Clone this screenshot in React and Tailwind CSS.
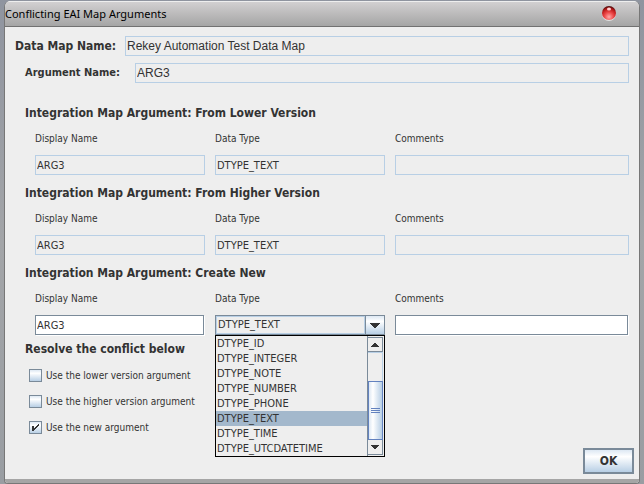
import { useState } from "react";

const TYPES = [
  "DTYPE_ID",
  "DTYPE_INTEGER",
  "DTYPE_NOTE",
  "DTYPE_NUMBER",
  "DTYPE_PHONE",
  "DTYPE_TEXT",
  "DTYPE_TIME",
  "DTYPE_UTCDATETIME",
];

const CHOICES = [
  { id: "lower", label: "Use the lower version argument" },
  { id: "higher", label: "Use the higher version argument" },
  { id: "new", label: "Use the new argument" },
];

const READ_ONLY =
  "block h-5 w-full min-w-0 border border-[#b8cfe5] bg-[#eeeeee] outline-none";
const EDITABLE =
  "block h-5 w-full min-w-0 border border-[#7a8a99] bg-white px-px text-[11px] outline-none shadow-[1px_1px_0_#ffffff]";
const HEADING = "h-5 pl-5 text-[12px] leading-5 font-bold";

function Columns({ children }) {
  return (
    <div className="grid grid-cols-[170px_170px_minmax(0,1fr)] gap-x-[10px] gap-y-1.5 pl-[30px]">
      {children}
    </div>
  );
}

function ColumnLabels({ id }) {
  return (
    <>
      <label className="h-5 leading-5" htmlFor={`${id}-name`}>Display Name</label>
      <label className="h-5 leading-5" htmlFor={`${id}-type`}>Data Type</label>
      <label className="h-5 leading-5" htmlFor={`${id}-comments`}>Comments</label>
    </>
  );
}

function VersionSection({ id, title }) {
  return (
    <section className="mb-2 flex flex-col gap-1.5">
      <h2 className={HEADING}>{title}</h2>
      <Columns>
        <ColumnLabels id={id} />
        <input id={`${id}-name`} readOnly defaultValue="ARG3" className={`${READ_ONLY} px-px text-[11px]`} />
        <input id={`${id}-type`} readOnly defaultValue="DTYPE_TEXT" className={`${READ_ONLY} px-px text-[11px]`} />
        <input id={`${id}-comments`} readOnly className={`${READ_ONLY} px-px text-[11px]`} />
      </Columns>
    </section>
  );
}

function ScrollBar() {
  return (
    <div className="flex w-4 shrink-0 flex-col border-l border-[#7a8a99] pt-px pb-px">
      <button type="button" aria-label="Scroll up" className="flex h-[15px] items-center justify-center border-y border-r border-[#7a8a99] bg-[#eeeeee]">
        <svg width="8" height="4" viewBox="0 0 8 4" shapeRendering="crispEdges" fill="#333333">
          <path d="M3 0h2v1H3zM2 1h4v1H2zM1 2h6v1H1zM0 3h8v1H0z" />
        </svg>
      </button>
      <div className="flex flex-1 flex-col justify-end border-t border-r border-[#b8cfe5] bg-[#eeeeee]">
        <div className="-mr-px flex h-[59px] flex-col items-center justify-center gap-px border border-[#6382bf] bg-linear-to-r from-[#dde8f3] via-white via-30% to-[#b8cfe5]">
          <span className="h-px w-[9px] bg-[#6382bf]" />
          <span className="h-px w-[9px] bg-[#6382bf]" />
          <span className="h-px w-[9px] bg-[#6382bf]" />
        </div>
      </div>
      <button type="button" aria-label="Scroll down" className="flex h-[15px] items-center justify-center border-r border-b border-[#7a8a99] bg-[#eeeeee]">
        <svg width="8" height="4" viewBox="0 0 8 4" shapeRendering="crispEdges" fill="#333333">
          <path d="M0 0h8v1H0zM1 1h6v1H1zM2 2h4v1H2zM3 3h2v1H3z" />
        </svg>
      </button>
    </div>
  );
}

function TypePicker({ id }) {
  const [type, setType] = useState("DTYPE_TEXT");
  return (
    <div className="relative h-5 text-[11px]">
      <select
        id={id}
        value={type}
        onChange={(e) => setType(e.target.value)}
        className="block h-5 w-full appearance-none border border-[#7a8a99] bg-[#eeeeee] pl-0.5 outline-none"
      >
        {TYPES.map((t) => (
          <option key={t}>{t}</option>
        ))}
      </select>
      <span className="pointer-events-none absolute inset-y-px right-5 left-px border border-[#b8cfe5]" />
      <span className="pointer-events-none absolute inset-y-px right-px flex w-[19px] items-center justify-center border-l border-[#7a8a99] bg-linear-to-b from-[#dde8f3] via-white via-30% to-[#b8cfe5]">
        <svg width="10" height="5" viewBox="0 0 10 5" shapeRendering="crispEdges" fill="#333333">
          <path d="M0 0h10v1H0zM1 1h8v1H1zM2 2h6v1H2zM3 3h4v1H3zM4 4h2v1H4z" />
        </svg>
      </span>
      <div className="absolute top-full left-0 z-10 flex w-full border border-black bg-[#eeeeee] pr-px">
        <ul role="listbox" aria-label="Data Type" className="flex-1">
          {TYPES.map((t) => (
            <li
              key={t}
              role="option"
              aria-selected={t === type}
              onClick={() => setType(t)}
              className="h-[15px] pl-px leading-[15px] aria-selected:bg-[#a3b8cc]"
            >
              {t}
            </li>
          ))}
        </ul>
        <ScrollBar />
      </div>
    </div>
  );
}

function Choice({ label, checked, onChange }) {
  return (
    <label className="flex h-[13px] items-center gap-1 leading-[13px]">
      <span className="relative flex">
        <input
          type="checkbox"
          checked={checked}
          onChange={onChange}
          className="size-[13px] appearance-none border border-[#7a8a99] bg-linear-to-b from-[#dde8f3] via-white via-30% to-[#b8cfe5]"
        />
        {checked && (
          <svg className="pointer-events-none absolute inset-0" width="13" height="13" viewBox="0 0 13 13" shapeRendering="crispEdges" fill="#333333">
            <path d="M3 5h2v5H3zM9 3h1v2H9zM8 4h1v2H8zM7 5h1v2H7zM6 6h1v2H6zM5 7h1v2H5z" />
          </svg>
        )}
      </span>
      {label}
    </label>
  );
}

export default function App() {
  const [choice, setChoice] = useState("new");
  return (
    <div className="flex min-h-screen flex-col bg-linear-to-b from-[#8f949f] via-[#a3a5a8] to-[#999da2] px-1 pt-px font-['DejaVu_Sans_Condensed','DejaVu_Sans',sans-serif] text-[10px] text-[#333333]">
      <main className="flex flex-1 flex-col overflow-hidden rounded-t-md rounded-b-sm border-x border-b border-[#777777] bg-[#eeeeee]">
        <header className="flex h-[26px] items-center justify-between border-t border-b border-t-[#eeeeee] border-b-[#717171] bg-linear-to-b from-[#d2d0d1] to-[#a5a5a5] pr-[22px]">
          <h1 className="font-['Noto_Sans',sans-serif] text-[11px] text-black">Conflicting EAI Map Arguments</h1>
          <button type="button" aria-label="Close">
            <svg width="16" height="18" viewBox="0 0 16 18">
              <defs>
                <radialGradient id="ball" cx="0.5" cy="0.78" r="0.8">
                  <stop offset="0" stopColor="#ffa8a8" />
                  <stop offset="0.4" stopColor="#ee4a4a" />
                  <stop offset="0.7" stopColor="#c01c1c" />
                  <stop offset="1" stopColor="#3c0808" />
                </radialGradient>
              </defs>
              <circle cx="8" cy="9" r="7" fill="#e2e2e2" />
              <circle cx="8" cy="8" r="7" fill="url(#ball)" />
              <ellipse cx="8" cy="4" rx="2" ry="1.5" fill="#ffd0d0" />
            </svg>
          </button>
        </header>

        <form className="flex flex-1 flex-col" onSubmit={(e) => e.preventDefault()}>
          <div className="flex flex-1 flex-col pt-[9px] pr-[10px]">
            <div className="mb-[7px] flex items-center pl-[10px]">
              <label htmlFor="map-name" className="w-[110px] text-[12px] leading-5 font-bold">Data Map Name:</label>
              <div className="flex-1">
                <input id="map-name" readOnly defaultValue="Rekey Automation Test Data Map" className={`${READ_ONLY} px-px font-['Liberation_Sans',sans-serif] text-[12px]`} />
              </div>
            </div>
            <div className="mb-5 flex items-center pl-5">
              <label htmlFor="arg-name" className="w-[110px] text-[11px] leading-5 font-bold">Argument Name:</label>
              <div className="flex-1">
                <input id="arg-name" readOnly defaultValue="ARG3" className={`${READ_ONLY} px-px font-['Liberation_Sans',sans-serif] text-[12px]`} />
              </div>
            </div>

            <VersionSection id="low" title="Integration Map Argument: From Lower Version" />
            <VersionSection id="high" title="Integration Map Argument: From Higher Version" />

            <section className="mb-1 flex flex-col gap-1.5">
              <h2 className={HEADING}>Integration Map Argument: Create New</h2>
              <Columns>
                <ColumnLabels id="create" />
                <div className="h-5 pr-px">
                  <input id="create-name" defaultValue="ARG3" className={EDITABLE} />
                </div>
                <TypePicker id="create-type" />
                <div className="h-5 pr-px">
                  <input id="create-comments" className={EDITABLE} />
                </div>
              </Columns>
            </section>

            <h2 className={HEADING}>Resolve the conflict below</h2>
            <div className="mt-[10px] flex flex-col gap-[13px] pl-6">
              {CHOICES.map((c) => (
                <Choice key={c.id} label={c.label} checked={choice === c.id} onChange={() => setChoice(c.id)} />
              ))}
            </div>
          </div>
          <div className="flex justify-end px-[5px] pb-[5px]">
            <button type="submit" className="h-[26px] w-[51px] border-2 border-[#7a8a99] bg-linear-to-b from-[#dde8f3] via-white via-30% to-[#b8cfe5] text-[12px] font-bold">
              OK
            </button>
          </div>
          <div className="h-1 bg-[#a5a5a5]" />
        </form>
      </main>
    </div>
  );
}
